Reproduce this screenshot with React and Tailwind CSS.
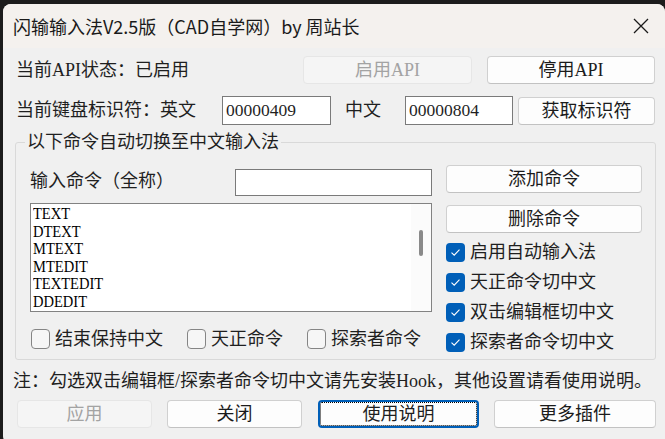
import React from "react";

const commands = ["TEXT", "DTEXT", "MTEXT", "MTEDIT", "TEXTEDIT", "DDEDIT"];

const Btn = ({ children, className = "", disabled = false }) => (
  <button
    type="button"
    className={
      "flex items-center justify-center rounded-[4px] border h-[28px] leading-none " +
      (disabled
        ? "bg-[#f5f5f5] border-[#e6e6e6] text-[#a3a3a3] "
        : "bg-[#fdfdfd] border-[#d0d0d0] border-b-[#c2c2c2] text-[#1b1b1b] ") +
      className
    }
  >
    {children}
  </button>
);

const Check = ({ checked, label, className = "" }) => (
  <div className={"flex items-center " + className}>
    {checked ? (
      <span className="w-[19px] h-[19px] rounded-[4px] bg-[#005fb8] flex items-center justify-center shrink-0">
        <svg width="11" height="9" viewBox="0 0 11 9">
          <path d="M1.5 4.6 L4.2 7.2 L9.5 1.6" fill="none" stroke="#fff" strokeWidth="1.1" />
        </svg>
      </span>
    ) : (
      <span className="w-[19px] h-[20px] rounded-[4px] border border-[#858585] bg-[#f6f6f6] shrink-0" />
    )}
    <span className="ml-[5px] whitespace-nowrap">{label}</span>
  </div>
);

const App = () => {
  return (
    <div className="w-full h-[439px] bg-[#1c1c1c] pl-[3px] pt-[4px] overflow-hidden">
      <div
        className="w-[662px] h-[440px] bg-[#f0f0f0] rounded-t-[8px] rounded-bl-[8px] overflow-hidden flex flex-col text-[18px] text-[#1f1f1f]"
        style={{ fontFamily: '"Liberation Serif", "Noto Sans CJK SC", serif' }}
      >
        {/* title bar */}
        <div className="h-[44px] shrink-0 flex items-center justify-between pl-[10px] pr-[16px] bg-[#f4f1ee]">
          <span
            className="text-[18px] text-[#1a1a1a] whitespace-nowrap"
            style={{ fontFamily: '"Noto Sans CJK SC", "Noto Sans", sans-serif' }}
          >
            闪输输入法V2.5版（CAD自学网）by 周站长
          </span>
          <svg width="16" height="16" viewBox="0 0 16 16">
            <path d="M1 1 L15 15 M15 1 L1 15" stroke="#1a1a1a" strokeWidth="1.3" />
          </svg>
        </div>

        {/* api state */}
        <div className="mt-[8px] h-[28px] flex items-center pl-[13px]">
          <span className="w-[287px] whitespace-nowrap">当前API状态：已启用</span>
          <Btn disabled className="w-[169px]">启用API</Btn>
          <Btn className="w-[168px] ml-[15px]">停用API</Btn>
        </div>

        {/* keyboard ids */}
        <div className="mt-[12px] h-[29px] flex items-center pl-[13px]">
          <span className="w-[206px] whitespace-nowrap">当前键盘标识符：英文</span>
          <div className="w-[109px] h-[29px] bg-white border border-[#7a7a7a] pl-[3px] flex items-center text-[17.5px]">00000409</div>
          <span className="ml-[14px] w-[60px]">中文</span>
          <div className="w-[108px] h-[29px] bg-white border border-[#7a7a7a] pl-[3px] flex items-center text-[17.5px]">00000804</div>
          <Btn className="w-[137px] ml-[5px]">获取标识符</Btn>
        </div>

        {/* group */}
        <fieldset className="mt-[6px] ml-[12px] w-[641px] h-[229px] border border-[#d9d9d9] rounded-[3px] flex">
          <legend className="ml-[9px] px-[2px] leading-[22px]">以下命令自动切换至中文输入法</legend>
          <div className="flex pl-[14px] pt-[12px]">
            <div className="w-[402px] flex flex-col">
              <div className="h-[31px] flex">
                <span className="self-center pt-[2px]">输入命令（全称）</span>
                <div className="ml-auto self-end w-[197px] h-[27px] bg-white border border-[#7a7a7a]" />
              </div>
              <div className="mt-[7px] h-[109px] bg-white border border-[#828282] flex">
                <div className="flex-1 pl-[2px] pt-[1px] overflow-hidden">
                  <div className="origin-left scale-x-[0.88] text-[16.5px] leading-[17.5px] text-black">
                    {commands.map((c) => (
                      <div key={c}>{c}</div>
                    ))}
                  </div>
                </div>
                <div className="w-[20px] bg-[#fbfbfb] flex justify-center pt-[26px]">
                  <div className="w-[4px] h-[26px] rounded-full bg-[#8a8a8a]" />
                </div>
              </div>
              <div className="mt-[17px] h-[20px] flex items-center pl-[1px]">
                <Check label="结束保持中文" className="w-[156px]" />
                <Check label="天正命令" className="w-[120px]" />
                <Check label="探索者命令" />
              </div>
            </div>
            <div className="ml-[14px] w-[196px] flex flex-col">
              <Btn className="w-full">添加命令</Btn>
              <Btn className="w-full mt-[12px]">删除命令</Btn>
              <div className="mt-[4px] flex flex-col">
                <Check checked label="启用自动输入法" className="h-[30px]" />
                <Check checked label="天正命令切中文" className="h-[30px]" />
                <Check checked label="双击编辑框切中文" className="h-[30px]" />
                <Check checked label="探索者命令切中文" className="h-[30px]" />
              </div>
            </div>
          </div>
        </fieldset>

        {/* note */}
        <div className="mt-[10px] h-[22px] pl-[10px] flex items-center whitespace-nowrap">
          注：勾选双击编辑框/探索者命令切中文请先安装Hook，其他设置请看使用说明。
        </div>

        {/* bottom buttons */}
        <div className="mt-[8px] h-[28px] flex pl-[14px]">
          <Btn disabled className="w-[135px]">应用</Btn>
          <Btn className="w-[135px] ml-[15px]">关闭</Btn>
          <button
            type="button"
            className="w-[161px] ml-[16px] h-[28px] flex items-center justify-center rounded-[4px] border-2 border-[#005fb8] bg-[#fdfdfd] outline-1 outline-dotted outline-black -outline-offset-3 leading-none"
          >
            使用说明
          </button>
          <Btn className="w-[162px] ml-[15px]">更多插件</Btn>
        </div>
      </div>
    </div>
  );
};

export default App;
